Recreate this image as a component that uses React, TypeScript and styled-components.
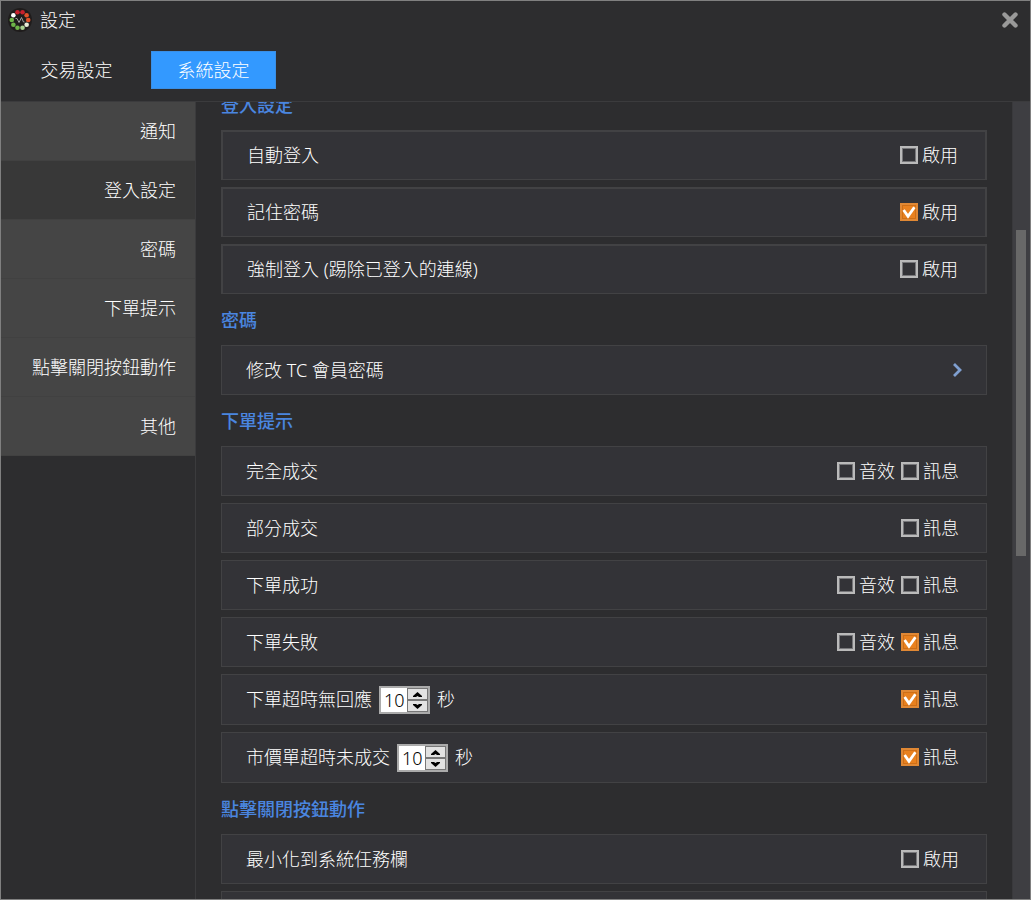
import React, { useState } from "react";
import styled, { createGlobalStyle } from "styled-components";

const GlobalStyle = createGlobalStyle`
  *, *::before, *::after { box-sizing: border-box; }
  body {
    margin: 0;
    background: #2d2d2f;
    color: #fff;
    font-family: "Noto Sans", "Noto Sans CJK TC", sans-serif;
    font-size: 18px;
    font-weight: 300;
    line-height: 26px;
  }
  button, input { font: inherit; color: inherit; }
  button { padding: 0; border: 0; background: none; cursor: pointer; }
`;

const Window = styled.div`
  display: flex;
  flex-direction: column;
  height: 100vh;
  border: 1px solid #808080;
  background: #2d2d2f;
  overflow: hidden;
`;

const Header = styled.header`
  flex: none;
  border-bottom: 1px solid #3b3b3d;
  padding-bottom: 12px;
`;

const TitleBar = styled.div`
  display: flex;
  align-items: center;
  gap: 8px;
  height: 38px;
  padding: 0 11px 0 7px;
`;

const Title = styled.h1`
  flex: 1;
  margin: 0;
  font-size: 18px;
  font-weight: 300;
`;

const CloseButton = styled.button`
  display: flex;
`;

const Tabs = styled.nav`
  display: flex;
  gap: 12px;
  padding: 12px 13px 0;
`;

const Tab = styled.button<{ $active?: boolean }>`
  min-width: 125px;
  height: 38px;
  border: 1px solid ${(p) => (p.$active ? "#3a8fe6" : "transparent")};
  background: ${(p) => (p.$active ? "#3399ff" : "transparent")};
  color: #fff;
`;

const Body = styled.div`
  display: flex;
  flex: 1;
  min-height: 0;
`;

const Sidebar = styled.nav`
  flex: none;
  width: 195px;
  border-right: 1px solid #3b3b3d;
`;

const SideItem = styled.button<{ $active?: boolean }>`
  display: block;
  width: 100%;
  height: 59px;
  padding: 0 19px;
  border-bottom: 1px solid #414141;
  background: ${(p) => (p.$active ? "#383838" : "#454545")};
  text-align: right;
`;

const Viewport = styled.main`
  flex: 1;
  min-width: 0;
  overflow: hidden;
`;

const Sections = styled.div`
  margin-top: -23px;
  padding: 0 25px;
`;

const SectionTitle = styled.h2`
  margin: 0;
  padding: 13px 0 12px;
  color: #4a86e0;
  font-size: 18px;
  font-weight: 500;
  line-height: 26px;
`;

const Rows = styled.div`
  display: flex;
  flex-direction: column;
  gap: 7px;
`;

const Row = styled.div<{ $inset?: boolean }>`
  display: flex;
  align-items: center;
  justify-content: space-between;
  min-height: 50px;
  padding: 9px 27px 10px 24px;
  border: 1px solid #424244;
  border-width: ${(p) => (p.$inset ? "2px 2px 1px" : "1px")};
  background: #333337;
`;

const RowLink = styled(Row)`
  padding-right: 24px;
  color: inherit;
  text-decoration: none;
`;

const RowLabel = styled.div`
  display: flex;
  align-items: center;
  gap: 7px;
`;

const Options = styled.div`
  display: flex;
  gap: 6px;
`;

const CheckLabel = styled.label`
  display: flex;
  align-items: center;
  gap: 4px;
  cursor: pointer;
`;

const CheckBox = styled.span`
  display: grid;
  width: 18px;
  height: 18px;

  > * { grid-area: 1 / 1; }
  svg { pointer-events: none; }
`;

const CheckInput = styled.input`
  appearance: none;
  width: 18px;
  height: 18px;
  margin: 0;
  border: 2px solid #bababa;
  box-shadow: inset 0 0 0 1px #77777a;

  &:checked {
    border-color: #e08834;
    background: #e8811f;
    box-shadow: inset 0 0 0 1px #cf6f16;
  }
`;

const Spinner = styled.span`
  display: flex;
  width: 51px;
  height: 28px;
  margin-top: 2px;
  border: 2px solid #ababab;
  background: #fff;
`;

const SpinnerInput = styled.input`
  flex: 1;
  min-width: 0;
  padding: 0 0 0 3px;
  border: 0;
  outline: 0;
  background: none;
  color: #000;
  line-height: 24px;
`;

const SpinnerButtons = styled.span`
  display: flex;
  flex-direction: column;
  width: 21px;
`;

const SpinnerButton = styled.button`
  display: flex;
  flex: 1;
  align-items: center;
  justify-content: center;
  border: 1px solid #777;
  background: #e2e2e2;
`;

const ScrollTrack = styled.div`
  flex: none;
  width: 18px;
  padding: 0 4px 0 3px;
  border-left: 1px solid #39393c;
  background: #3e3e42;
`;

const ScrollSpace = styled.div`
  height: 16%;
`;

const ScrollThumb = styled.div`
  width: 10px;
  height: 41%;
  background: #686868;
`;

const DOTS = ["#c8202c", "#e0522a", "#e0522a", "#e8ecd8", "#a8d090", "#6db548", "#6db548", "#6db548", "#ffffff", "#c8202c"];

function Logo() {
  return (
    <svg width="24" height="24" viewBox="0 0 24 24" aria-hidden="true">
      <circle cx="12" cy="12" r="12" fill="#1f1c1c" />
      {DOTS.map((color, i) => {
        const angle = ((i * 36 - 72) * Math.PI) / 180;
        return <circle key={i} cx={12 + 8.2 * Math.cos(angle)} cy={12 + 8.2 * Math.sin(angle)} r="2.3" fill={color} />;
      })}
      <path d="M7.5 10.5 9 10.5 11 14.5 13.5 9.5 15.5 14 16.5 14" fill="none" stroke="#a0a0a0" strokeWidth="1" />
    </svg>
  );
}

function Check({ label, checked }: { label: string; checked?: boolean }) {
  const [on, setOn] = useState(!!checked);
  return (
    <CheckLabel>
      <CheckBox>
        <CheckInput type="checkbox" checked={on} onChange={(e) => setOn(e.target.checked)} />
        {on && (
          <svg width="18" height="18" viewBox="0 0 18 18" aria-hidden="true">
            <path d="M3.6 7 8 13.4 14.4 4.2" fill="none" stroke="#fff" strokeWidth="2.8" />
          </svg>
        )}
      </CheckBox>
      {label}
    </CheckLabel>
  );
}

function Seconds({ label }: { label: string }) {
  const [value, setValue] = useState(10);
  return (
    <RowLabel>
      <span>{label}</span>
      <Spinner>
        <SpinnerInput
          aria-label={label}
          inputMode="numeric"
          value={value}
          onChange={(e) => setValue(Number(e.target.value) || 0)}
        />
        <SpinnerButtons>
          <SpinnerButton aria-label="+" onClick={() => setValue(value + 1)}>
            <svg width="9" height="5" viewBox="0 0 9 5" aria-hidden="true">
              <path d="M0 5 0 4 4.5 0 9 4 9 5 6 5 4.5 4 3 5Z" fill="#000" />
            </svg>
          </SpinnerButton>
          <SpinnerButton aria-label="-" onClick={() => setValue(Math.max(0, value - 1))}>
            <svg width="9" height="5" viewBox="0 0 9 5" aria-hidden="true">
              <path d="M0 0 0 1 4.5 5 9 1 9 0 6 0 4.5 1 3 0Z" fill="#000" />
            </svg>
          </SpinnerButton>
        </SpinnerButtons>
      </Spinner>
      <span>秒</span>
    </RowLabel>
  );
}

type Setting = { label: string; seconds?: boolean; checks: [string, boolean][] };

function SettingRow({ setting, inset }: { setting: Setting; inset?: boolean }) {
  return (
    <Row $inset={inset}>
      {setting.seconds ? <Seconds label={setting.label} /> : <RowLabel>{setting.label}</RowLabel>}
      <Options>
        {setting.checks.map(([label, checked]) => (
          <Check key={label} label={label} checked={checked} />
        ))}
      </Options>
    </Row>
  );
}

const LOGIN: Setting[] = [
  { label: "自動登入", checks: [["啟用", false]] },
  { label: "記住密碼", checks: [["啟用", true]] },
  { label: "強制登入 (踢除已登入的連線)", checks: [["啟用", false]] },
];

const ORDERS: Setting[] = [
  { label: "完全成交", checks: [["音效", false], ["訊息", false]] },
  { label: "部分成交", checks: [["訊息", false]] },
  { label: "下單成功", checks: [["音效", false], ["訊息", false]] },
  { label: "下單失敗", checks: [["音效", false], ["訊息", true]] },
  { label: "下單超時無回應", seconds: true, checks: [["訊息", true]] },
  { label: "市價單超時未成交", seconds: true, checks: [["訊息", true]] },
];

const SIDE = ["通知", "登入設定", "密碼", "下單提示", "點擊關閉按鈕動作", "其他"];

export default function App() {
  const [section, setSection] = useState("登入設定");
  return (
    <>
      <GlobalStyle />
      <Window>
        <Header>
          <TitleBar>
            <Logo />
            <Title>設定</Title>
            <CloseButton aria-label="關閉">
              <svg width="18" height="18" viewBox="0 0 18 18" aria-hidden="true">
                <path d="M3.5 3.5 14.5 14.5M14.5 3.5 3.5 14.5" stroke="#999" strokeWidth="4.4" strokeLinecap="round" />
              </svg>
            </CloseButton>
          </TitleBar>
          <Tabs>
            <Tab>交易設定</Tab>
            <Tab $active>系統設定</Tab>
          </Tabs>
        </Header>
        <Body>
          <Sidebar>
            {SIDE.map((name) => (
              <SideItem key={name} $active={name === section} onClick={() => setSection(name)}>
                {name}
              </SideItem>
            ))}
          </Sidebar>
          <Viewport>
            <Sections>
              <SectionTitle>登入設定</SectionTitle>
              <Rows>
                {LOGIN.map((s) => (
                  <SettingRow key={s.label} setting={s} inset />
                ))}
              </Rows>
              <SectionTitle>密碼</SectionTitle>
              <RowLink as="a" href="#password">
                修改 TC 會員密碼
                <svg width="10" height="16" viewBox="0 0 10 16" aria-hidden="true">
                  <path d="M2 2 8 8 2 14" fill="none" stroke="#7f9fd0" strokeWidth="2.8" />
                </svg>
              </RowLink>
              <SectionTitle>下單提示</SectionTitle>
              <Rows>
                {ORDERS.map((s) => (
                  <SettingRow key={s.label} setting={s} />
                ))}
              </Rows>
              <SectionTitle>點擊關閉按鈕動作</SectionTitle>
              <Rows>
                <SettingRow setting={{ label: "最小化到系統任務欄", checks: [["啟用", false]] }} />
                <Row />
              </Rows>
            </Sections>
          </Viewport>
          <ScrollTrack>
            <ScrollSpace />
            <ScrollThumb />
          </ScrollTrack>
        </Body>
      </Window>
    </>
  );
}
